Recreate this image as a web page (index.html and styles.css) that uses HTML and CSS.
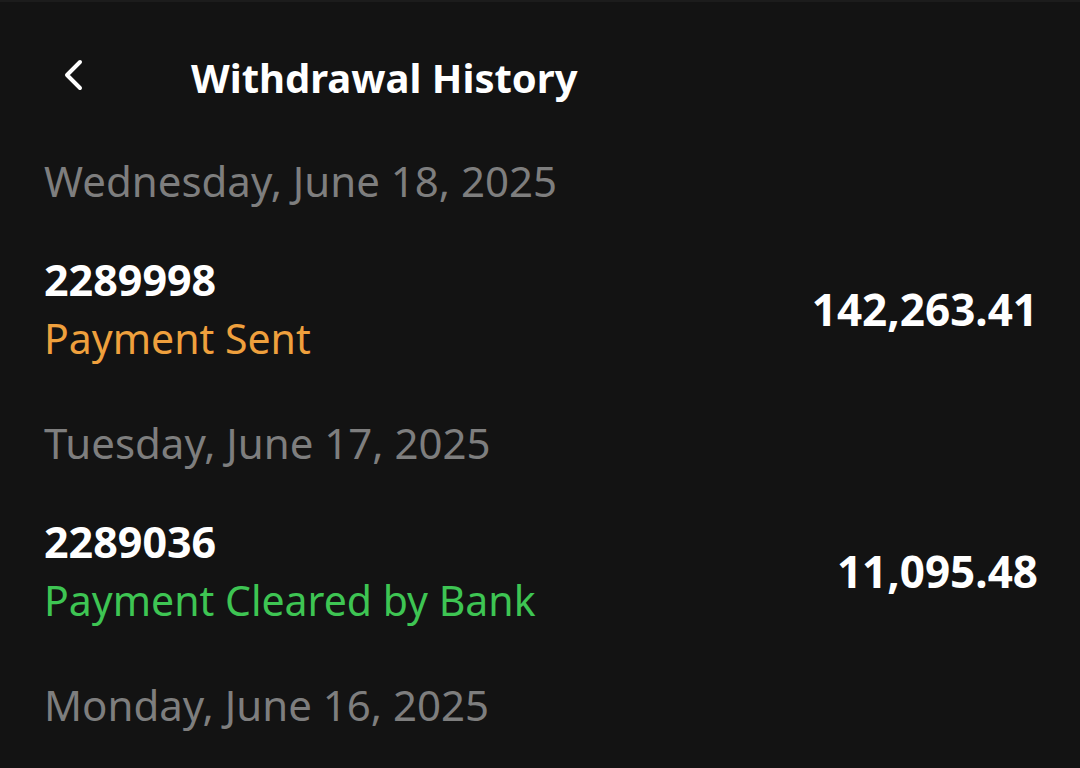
FILE: index.html
```html
<!DOCTYPE html>
<html>
<head>
<meta charset="utf-8">
<link rel="stylesheet" href="styles.css">
</head>
<body>
<div class="screen">
  <header class="topbar">
    <button class="back" aria-label="Back">
      <svg width="20" height="32" viewBox="0 0 20 32"><path d="M17 3 L4 16 L17 29" fill="none" stroke="#fff" stroke-width="4" stroke-linecap="round" stroke-linejoin="round"/></svg>
    </button>
    <h1 class="title">Withdrawal History</h1>
  </header>
  <main class="list">
    <section class="day">
      <div class="date">Wednesday, June 18, 2025</div>
      <div class="item">
        <div class="info">
          <div class="id">2289998</div>
          <div class="status sent">Payment Sent</div>
        </div>
        <div class="amount">142,263.41</div>
      </div>
    </section>
    <section class="day">
      <div class="date">Tuesday, June 17, 2025</div>
      <div class="item">
        <div class="info">
          <div class="id">2289036</div>
          <div class="status cleared">Payment Cleared by Bank</div>
        </div>
        <div class="amount">11,095.48</div>
      </div>
    </section>
    <section class="day">
      <div class="date">Monday, June 16, 2025</div>
    </section>
  </main>
</div>
</body>
</html>
```
FILE: styles.css
```css
html, body {
  margin: 0;
  padding: 0;
  background: #131313;
}
body {
  font-family: "Noto Sans", "Open Sans", sans-serif;
  color: #ffffff;
  width: 1080px;
  height: 768px;
  overflow: hidden;
}
.screen {
  border-top: 2px solid #1c1c1c;
}
.topbar {
  display: flex;
  align-items: center;
  height: 76px;
  margin-top: 38px;
}
.back {
  background: none;
  border: none;
  padding: 0 0 6px 0;
  margin-left: 63px;
  width: 20px;
  height: 38px;
  display: flex;
  align-items: flex-start;
  justify-content: center;
}
.back svg {
  display: block;
}
.title {
  margin: 0 0 0 108px;
  font-size: 40px;
  font-weight: 700;
  line-height: 1;
  color: #ffffff;
}
.list {
  padding: 44px 42px 0 44px;
}
.day + .day {
  margin-top: 63px;
}
.date {
  color: #7e7e7e;
  font-size: 42px;
  line-height: 1;
}
.item {
  display: flex;
  align-items: center;
  justify-content: space-between;
  margin-top: 56px;
}
.id {
  font-size: 43px;
  font-weight: 700;
  line-height: 1;
}
.status {
  font-size: 41px;
  line-height: 1;
  margin-top: 17px;
}
.sent { color: #efa03d; }
.cleared { color: #3ec553; }
.amount {
  font-size: 44px;
  font-weight: 700;
  line-height: 1;
}
```
